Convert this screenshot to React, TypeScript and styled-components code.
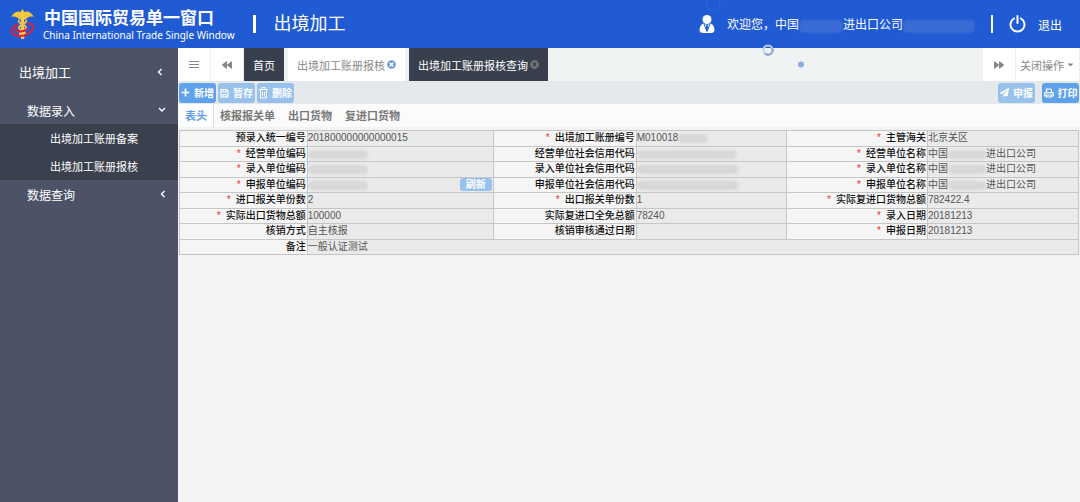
import React, { Fragment, ReactNode } from 'react';
import styled, { createGlobalStyle, css } from 'styled-components';
import { FaPlus, FaPaperPlane, FaBackward, FaForward, FaTimesCircle, FaCaretDown } from 'react-icons/fa';

const GlobalStyle = createGlobalStyle`
  *, *::before, *::after { box-sizing: border-box; }
  html, body, #root { height: 100%; }
  body {
    margin: 0;
    background: #f3f3f3;
    font-family: "Liberation Sans", "Noto Sans CJK SC", sans-serif;
    font-size: 12px;
    color: #222;
  }
  button, input { font: inherit; }
  a { color: inherit; text-decoration: none; }
`;

const Page = styled.div`
  min-height: 100%;
  display: flex;
  flex-direction: column;
`;

const Header = styled.header`
  position: relative;
  display: flex;
  align-items: center;
  height: 48px;
  padding: 0 18px 0 10px;
  background: #205bd4;
  color: #fff;
`;

const Brand = styled.a`
  display: flex;
  align-items: center;
  gap: 8px;
  white-space: nowrap;
`;

const BrandText = styled.div`
  display: flex;
  flex-direction: column;
  padding-top: 3px;
`;

const BrandName = styled.span`
  padding-left: 1px;
  font-size: 17px;
  line-height: 19px;
  font-weight: 700;
`;

const BrandEnglish = styled.span`
  font-family: "Noto Sans", sans-serif;
  font-size: 10px;
  line-height: 14px;
`;

const HeaderRule = styled.span<{ $thin?: boolean }>`
  width: ${(p) => (p.$thin ? 2 : 3)}px;
  height: 18px;
  background: #fff;
`;

const SystemName = styled.h1`
  margin: 0;
  font-size: 18px;
  line-height: 24px;
  font-weight: 400;
`;

const BrandGroup = styled.div`
  display: flex;
  align-items: center;
  gap: 18px;
`;

const UserGroup = styled.div`
  display: flex;
  align-items: center;
  gap: 16px;
  margin-left: auto;
  white-space: nowrap;
`;

const Welcome = styled.div`
  display: flex;
  align-items: center;
  gap: 12px;
`;

const Mask = styled.span<{ $w: number; $tone?: 'header' }>`
  display: inline-block;
  width: ${(p) => p.$w}px;
  height: ${(p) => (p.$tone === 'header' ? 13 : 9)}px;
  border-radius: 5px;
  vertical-align: middle;
  background: ${(p) => (p.$tone === 'header' ? '#3a6bd5' : '#d8d8d8')};
  filter: blur(1px);
`;

const Logout = styled.button`
  display: flex;
  align-items: center;
  gap: 12px;
  padding: 0;
  border: 0;
  background: none;
  color: #fff;
`;

const Bubbles = styled.svg`
  position: absolute;
  left: 65%;
  top: 0;
  pointer-events: none;
`;

const Body = styled.div`
  flex: 1;
  display: flex;
`;

const Sidebar = styled.nav`
  flex: 0 0 178px;
  padding-top: 7px;
  background: #4c5366;
  color: #fff;
`;

const MenuList = styled.ul`
  margin: 0;
  padding: 0;
  list-style: none;
`;

const SubMenu = styled(MenuList)`
  background: #3a404e;
`;

const MenuLink = styled.a<{ $level: 1 | 2 | 3 }>`
  display: flex;
  align-items: center;
  justify-content: space-between;
  height: 28px;
  ${(p) => p.$level === 1 && css`height: 33px; padding: 0 15px 0 19px; font-size: 13px;`}
  ${(p) => p.$level === 2 && css`padding: 0 12px 0 27px;`}
  ${(p) => p.$level === 3 && css`padding-left: 50px; font-size: 11px;`}
`;

const MenuGroup = styled.li`
  padding-top: 8px;
`;

const Main = styled.main`
  flex: 1;
  min-width: 0;
`;

const PageTabs = styled.div`
  display: flex;
  height: 33px;
  background: #eff3f4;
  color: #888;
`;

const TabBarButton = styled.button<{ $w: number }>`
  display: flex;
  align-items: center;
  justify-content: center;
  gap: 2px;
  width: ${(p) => p.$w}px;
  padding: 0;
  border: 0;
  border-right: 1px solid #eee;
  background: #fff;
  color: #888;
  font-size: 11px;
`;

const PageTab = styled.button<{ $dark?: boolean }>`
  display: flex;
  align-items: center;
  gap: 2px;
  padding: 0 9px;
  margin-right: 4px;
  border: 0;
  white-space: nowrap;
  font-size: 11px;
  background: ${(p) => (p.$dark ? '#38404e' : '#fff')};
  color: ${(p) => (p.$dark ? '#fff' : '#888')};
`;

const TabsEnd = styled.div`
  display: flex;
  margin-left: auto;
`;

const Toolbar = styled.div`
  display: flex;
  align-items: center;
  gap: 2px;
  height: 23px;
  padding: 0 1px;
  background: #e5e9ec;
`;

const ToolButton = styled.button<{ $faded?: boolean }>`
  display: flex;
  align-items: center;
  justify-content: center;
  gap: 4px;
  width: 37px;
  height: 20px;
  padding: 0;
  border: 0;
  border-radius: 3px;
  white-space: nowrap;
  font-size: 10px;
  font-weight: 700;
  color: #fff;
  background: ${(p) => (p.$faded ? '#98c1ec' : '#5fa1ea')};
`;

const ToolEnd = styled.div`
  display: flex;
  gap: 7px;
  margin-left: auto;
`;

const FormTabs = styled.div`
  display: flex;
  height: 23px;
  padding-left: 1px;
  margin-bottom: 3px;
  background: #fbfbfb;
`;

const FormTab = styled.button<{ $active?: boolean }>`
  padding: 0 6px;
  border: 0;
  background: ${(p) => (p.$active ? '#fff' : 'none')};
  border-right: 1px solid ${(p) => (p.$active ? '#ddd' : 'transparent')};
  color: ${(p) => (p.$active ? '#5c9ded' : '#777')};
  font-size: 11px;
  font-weight: 700;
  line-height: 20px;
`;

const FormWrap = styled.form`
  padding: 0 1px;
`;

const Table = styled.table`
  width: 100%;
  height: 125px;
  table-layout: fixed;
  border-collapse: collapse;
  font-size: 10px;
  line-height: 14px;
`;

const LabelCell = styled.th`
  padding: 0 1px 0 0;
  border: 1px solid #c6c6c6;
  background: #f5f5f5;
  text-align: right;
  font-weight: 500;
  color: #111;
  white-space: nowrap;
`;

const Star = styled.span`
  margin-right: 5px;
  color: #e33;
`;

const ValueCell = styled.td`
  padding: 0;
  border: 1px solid #c6c6c6;
  background: #eaeaea;
  color: #555;
`;

const ValueRow = styled.div`
  display: flex;
  align-items: center;
  height: 14px;
  padding-right: 1px;
  white-space: nowrap;
`;

const ValueInput = styled.input`
  flex: 1;
  min-width: 0;
  height: 14px;
  padding: 0;
  border: 0;
  outline: 0;
  background: none;
  color: #555;
`;

const RefreshButton = styled.button`
  margin-left: auto;
  width: 32px;
  height: 13px;
  padding: 0;
  border: 0;
  border-radius: 3px;
  background: #98c1ec;
  color: #fff;
  font-weight: 700;
  line-height: 13px;
`;

const Emblem = () => (
  <svg width="25" height="32" viewBox="0 0 25 32" fill="none" aria-hidden="true">
    <path d="M1 9C4 4 8 2.500 10.500 4L12.500 1L14.500 4C17 2.500 21 4 24 9C20.500 8 17.500 9 15.800 11.500H9.200C7.500 9 4.500 8 1 9Z" fill="#f0c63c" />
    <path d="M12.500 4V31" stroke="#f5cf4a" strokeWidth="3" />
    <path d="M9 12C7 15 17 17 16 20C15 23 9 23 10 26C10.500 28 13 28 14 30M16 12C18 15 8 17 9 20C10 23 16 23 15 26C14.500 28 12 28 11 29" stroke="#ecc04a" strokeWidth="2" />
    <path d="M8 17C1 18.500 -.5 25 6 27.500C13 29.500 22 25 23 19.500C23.300 16.500 20.500 15 17.500 16M5 20.500C6 24 12 25 18 20.500" stroke="#e3203a" strokeWidth="2" />
  </svg>
);

const UserIcon = () => (
  <svg width="16" height="20" viewBox="0 0 16 20" aria-hidden="true">
    <circle cx="8" cy="5.500" r="4.500" fill="#fff" />
    <path d="M4 9.500C1.500 11 .5 13.500 .5 16C.5 18 2 19 4 19H12C14 19 15.500 18 15.500 16C15.500 13.500 14.500 11 12 9.500L8 11Z" fill="#fff" />
    <path d="M5 10L8 17.500L11 10" fill="none" stroke="#205bd4" />
    <path d="M7.300 11H8.700L9.200 15L8 17L6.800 15Z" fill="#205bd4" />
  </svg>
);

const PowerIcon = () => (
  <svg width="17" height="18" viewBox="0 0 17 18" fill="none" stroke="#fff" strokeWidth="2" strokeLinecap="round" aria-hidden="true">
    <path d="M8.500 1V8M5 3.500A7 7 0 1 0 12 3.500" />
  </svg>
);

const Chevron = ({ open }: { open?: boolean }) => (
  <svg width={open ? 8 : 6} height="8" viewBox={open ? '0 0 8 8' : '0 0 6 8'} fill="none" stroke="#fff" strokeWidth="1.400" aria-hidden="true">
    <path d={open ? 'M1 2L4 5L7 2' : 'M4.500 1L1.500 4L4.500 7'} />
  </svg>
);

const BarsIcon = () => (
  <svg width="10" height="9" viewBox="0 0 10 9" stroke="#888" strokeWidth="1.200" aria-hidden="true">
    <path d="M0 1.500H10M0 4.500H10M0 7.500H10" />
  </svg>
);

const SaveIcon = () => (
  <svg width="9" height="10" viewBox="0 0 9 10" fill="none" stroke="#fff" strokeWidth="1.200" aria-hidden="true">
    <path d="M1 1.500H6.500L8 3V9H1ZM3 1.500V4H6V1.500M3 9V6.500H6V9" />
  </svg>
);

const TrashIcon = () => (
  <svg width="9" height="12" viewBox="0 0 9 12" fill="none" stroke="#fff" aria-hidden="true">
    <path d="M0 2.500H9M3 2.500V.5H6V2.500M1.500 2.500V11H7.500V2.500M3.500 4.500V9.500M5.500 4.500V9.500" />
  </svg>
);

const PrintIcon = () => (
  <svg width="10" height="10" viewBox="0 0 10 10" fill="none" stroke="#fff" strokeWidth="1.200" aria-hidden="true">
    <path d="M2.500 4.500V1H6.500L7.500 2V4.500M2.500 9V7H7.500V9Z" />
    <path d="M2 8H.7V5.500Q.7 4.700 1.500 4.700H8.500Q9.300 4.700 9.300 5.500V8H8" />
  </svg>
);

type Field = {
  id: string;
  label: string;
  required?: boolean;
  value?: string;
  masked?: ReactNode;
  refresh?: boolean;
  span?: number;
};

const company = <>中国<Mask $w={38} />进出口公司</>;

const rows: Field[][] = [
  [
    { id: 'preNo', label: '预录入统一编号', value: '201800000000000015' },
    { id: 'bookNo', label: '出境加工账册编号', required: true, masked: <>M010018<Mask $w={30} /></> },
    { id: 'customs', label: '主管海关', required: true, value: '北京关区' },
  ],
  [
    { id: 'tradeCode', label: '经营单位编码', required: true, masked: <Mask $w={60} /> },
    { id: 'tradeCredit', label: '经营单位社会信用代码', masked: <Mask $w={100} /> },
    { id: 'tradeName', label: '经营单位名称', required: true, masked: company },
  ],
  [
    { id: 'inputCode', label: '录入单位编码', required: true, masked: <Mask $w={60} /> },
    { id: 'inputCredit', label: '录入单位社会信用代码', masked: <Mask $w={102} /> },
    { id: 'inputName', label: '录入单位名称', required: true, masked: company },
  ],
  [
    { id: 'declCode', label: '申报单位编码', required: true, masked: <Mask $w={60} />, refresh: true },
    { id: 'declCredit', label: '申报单位社会信用代码', masked: <Mask $w={102} /> },
    { id: 'declName', label: '申报单位名称', required: true, masked: company },
  ],
  [
    { id: 'importCount', label: '进口报关单份数', required: true, value: '2' },
    { id: 'exportCount', label: '出口报关单份数', required: true, value: '1' },
    { id: 'reimportTotal', label: '实际复进口货物总额', required: true, value: '782422.4' },
  ],
  [
    { id: 'exportTotal', label: '实际出口货物总额', required: true, value: '100000' },
    { id: 'exemptTotal', label: '实际复进口全免总额', value: '78240' },
    { id: 'inputDate', label: '录入日期', required: true, value: '20181213' },
  ],
  [
    { id: 'method', label: '核销方式', value: '自主核报' },
    { id: 'passDate', label: '核销审核通过日期', value: '' },
    { id: 'declDate', label: '申报日期', required: true, value: '20181213' },
  ],
  [{ id: 'remark', label: '备注', value: '一般认证测试', span: 5 }],
];

const FieldCells = ({ field }: { field: Field }) => (
  <Fragment>
    <LabelCell scope="row">
      {field.required && <Star>*</Star>}
      <label htmlFor={field.id}>{field.label}</label>
    </LabelCell>
    <ValueCell colSpan={field.span}>
      <ValueRow>
        {field.masked ? <output id={field.id}>{field.masked}</output> : <ValueInput id={field.id} readOnly value={field.value} />}
        {field.refresh && <RefreshButton type="button">刷新</RefreshButton>}
      </ValueRow>
    </ValueCell>
  </Fragment>
);

export default function App() {
  return (
    <Page>
      <GlobalStyle />
      <Header>
        <BrandGroup>
          <Brand href="#">
            <Emblem />
            <BrandText>
              <BrandName>中国国际贸易单一窗口</BrandName>
              <BrandEnglish>China International Trade Single Window</BrandEnglish>
            </BrandText>
          </Brand>
          <HeaderRule />
          <SystemName>出境加工</SystemName>
        </BrandGroup>
        <UserGroup>
          <Welcome>
            <UserIcon />
            <span>欢迎您，中国<Mask $w={44} $tone="header" />进出口公司<Mask $w={72} $tone="header" /></span>
          </Welcome>
          <HeaderRule $thin />
          <Logout type="button"><PowerIcon />退出</Logout>
        </UserGroup>
        <Bubbles width="110" height="70" viewBox="0 0 110 70" fill="none" aria-hidden="true">
          <circle cx="11" cy="3" r="7" stroke="#3468d8" />
          <circle cx="66" cy="50" r="4.500" stroke="#c3d0e8" strokeWidth="2" />
          <path d="M70 48A4.500 4.500 0 0 1 63 53.500" stroke="#8fa9d6" strokeWidth="2" />
          <circle cx="99" cy="64.500" r="3" fill="#8eaddf" />
        </Bubbles>
      </Header>
      <Body>
        <Sidebar>
          <MenuList>
            <li><MenuLink href="#" $level={1}>出境加工<Chevron /></MenuLink></li>
            <MenuGroup>
              <MenuLink href="#" $level={2}>数据录入<Chevron open /></MenuLink>
              <SubMenu>
                <li><MenuLink href="#" $level={3}>出境加工账册备案</MenuLink></li>
                <li><MenuLink href="#" $level={3}>出境加工账册报核</MenuLink></li>
              </SubMenu>
            </MenuGroup>
            <li><MenuLink href="#" $level={2}>数据查询<Chevron /></MenuLink></li>
          </MenuList>
        </Sidebar>
        <Main>
          <PageTabs>
            <TabBarButton $w={33} aria-label="菜单"><BarsIcon /></TabBarButton>
            <TabBarButton $w={33} aria-label="向左"><FaBackward size={10} /></TabBarButton>
            <PageTab $dark>首页</PageTab>
            <PageTab>出境加工账册报核<FaTimesCircle size={9} color="#6f9bd8" /></PageTab>
            <PageTab $dark>出境加工账册报核查询<FaTimesCircle size={9} color="#777" /></PageTab>
            <TabsEnd>
              <TabBarButton $w={33} aria-label="向右"><FaForward size={10} /></TabBarButton>
              <TabBarButton $w={64}>关闭操作<FaCaretDown size={9} /></TabBarButton>
            </TabsEnd>
          </PageTabs>
          <Toolbar>
            <ToolButton><FaPlus size={9} />新增</ToolButton>
            <ToolButton $faded><SaveIcon />暂存</ToolButton>
            <ToolButton $faded><TrashIcon />删除</ToolButton>
            <ToolEnd>
              <ToolButton $faded><FaPaperPlane size={9} />申报</ToolButton>
              <ToolButton><PrintIcon />打印</ToolButton>
            </ToolEnd>
          </Toolbar>
          <FormTabs>
            <FormTab $active>表头</FormTab>
            <FormTab>核报报关单</FormTab>
            <FormTab>出口货物</FormTab>
            <FormTab>复进口货物</FormTab>
          </FormTabs>
          <FormWrap>
            <Table>
              <colgroup>
                <col style={{ width: '14.2%' }} />
                <col style={{ width: '20.7%' }} />
                <col style={{ width: '15.9%' }} />
                <col style={{ width: '16.7%' }} />
                <col style={{ width: '15.7%' }} />
                <col style={{ width: '16.8%' }} />
              </colgroup>
              <tbody>
                {rows.map((row) => (
                  <tr key={row[0].id}>{row.map((f) => <FieldCells key={f.id} field={f} />)}</tr>
                ))}
              </tbody>
            </Table>
          </FormWrap>
        </Main>
      </Body>
    </Page>
  );
}
